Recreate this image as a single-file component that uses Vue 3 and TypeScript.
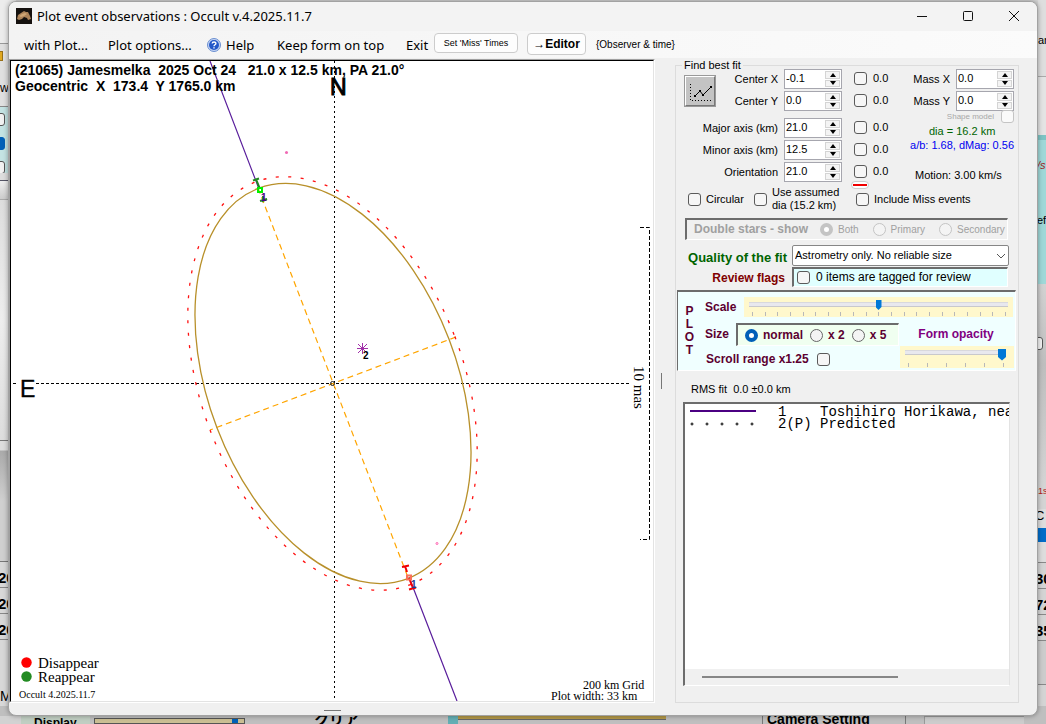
<script setup lang="ts">
import { ref } from 'vue'

interface Fit { id: string; label: string; value: string }

const centre = ref<Fit[]>([
  { id: 'cx', label: 'Center X', value: '-0.1' },
  { id: 'cy', label: 'Center Y', value: '0.0' },
])
const shape = ref<Fit[]>([
  { id: 'major', label: 'Major axis (km)', value: '21.0' },
  { id: 'minor', label: 'Minor axis (km)', value: '12.5' },
  { id: 'orient', label: 'Orientation', value: '21.0' },
])
const mass = ref<Fit[]>([
  { id: 'mx', label: 'Mass X', value: '0.0' },
  { id: 'my', label: 'Mass Y', value: '0.0' },
])
const groups = [centre, shape]

const size = ref('normal')
const sizes = ['normal', 'x 2', 'x 5']
const star = ref('Both')
const stars = ['Both', 'Primary', 'Secondary']
const scale = ref(10)
const opacity = ref(5)

function step(f: Fit, d: number) {
  f.value = (parseFloat(f.value) + d).toFixed(1)
}
</script>

<template>
  <div class="desktop">
    <div class="edge left" aria-hidden="true">
      <i class="l1"></i><i class="l2"><b></b></i><i class="l3">wi</i>
      <i class="l4"><u></u><u class="on"></u><u></u></i>
      <i class="l5"></i><i class="l6"></i><i class="l7"></i><i class="l8"></i>
      <i class="num">20</i><i class="num">20</i><i class="num">20</i>
      <i class="l9">M</i>
    </div>
    <div class="edge right" aria-hidden="true">
      <i class="r1">an</i><i class="r2"></i>
      <i class="r3"><em>/s</em><span>ef</span></i>
      <i class="r4"><u></u></i><i class="r5">1s</i><i class="r6">C</i><i class="r7"></i>
      <i class="r8"></i>
      <i class="num">30</i><i class="num">72</i><i class="num">35</i><i class="r9"></i>
    </div>
    <div class="edge bottom" aria-hidden="true">
      <i class="b1"></i><i class="b2">Display</i><i class="b3"><b></b></i><i class="b4">クリア</i>
      <i class="b5"></i><i class="b6"></i><i class="b7"></i><i class="b8">Camera Setting</i><i class="b9"></i>
    </div>

    <main class="window">
      <header class="title">
        <svg class="logo" viewBox="0 0 16 16"><rect width="16" height="16" fill="#15110f" /><path d="M1 11 2 7 5 5 8 3 10 4 12 4 14 8 15 11 12 12 11 10 8 9 6 11 3 12Z" fill="#ad8359" /><path d="M3 8 6 6 9 5 11 6 8 8 5 9Z" fill="#d0a675" /></svg>
        <h1>Plot event observations : Occult v.4.2025.11.7</h1>
        <button class="cap" aria-label="Minimise"><svg viewBox="0 0 12 12"><path d="M1 6.5H11" /></svg></button>
        <button class="cap" aria-label="Maximise"><svg viewBox="0 0 12 12"><rect x="1.5" y="1.5" width="9" height="9" rx="1" /></svg></button>
        <button class="cap" aria-label="Close"><svg viewBox="0 0 12 12"><path d="M1 1 11 11M11 1 1 11" /></svg></button>
      </header>

      <nav class="menu">
        <button class="mi m1">with Plot...</button>
        <button class="mi m2">Plot options...</button>
        <button class="mi m3">
          <svg viewBox="0 0 14 14"><circle cx="7" cy="7" r="6.5" fill="#c6d6f4" stroke="#6a8fd0" /><circle cx="7" cy="7" r="5" fill="#2458c8" /><path d="M5.2 5.6C5.2 3.4 8.9 3.4 8.9 5.5 8.9 6.8 7 6.8 7 8.2M7 9.3V10.6" fill="none" stroke="#fff" stroke-width="1.4" /></svg>
          Help
        </button>
        <button class="mi m4">Keep form on top</button>
        <button class="mi m5">Exit</button>
        <button class="push miss">Set 'Miss' Times</button>
        <button class="push editor">→Editor</button>
        <button class="obs">{Observer &amp; time}</button>
      </nav>

      <div class="body">
        <section class="plot">
          <svg viewBox="11 61 642 640" preserveAspectRatio="xMidYMid meet" role="img" aria-label="Asteroid profile plot">
            <g fill="none">
              <path d="M334.500 61V701" stroke="#000" stroke-dasharray="2 3" />
              <path d="M13 383.500H17M36 383.500H629" stroke="#000" stroke-dasharray="3 2" />
              <path d="M640 227.500H649.500V539.500H640" stroke="#000" stroke-dasharray="4 2" />
              <path d="M210 61 259 189M409 577 457 701" stroke="#5a1f9c" stroke-width="1.2" />
              <path d="M258 188 409 580M456 337 210 430" stroke="#ffa500" stroke-width="1.2" stroke-dasharray="6 4" />
              <ellipse cx="333" cy="383.500" rx="124.200" ry="208.900" transform="rotate(-21 333 383.500)" stroke="#b8902a" stroke-width="1.300" />
              <ellipse cx="332.500" cy="383.500" rx="131" ry="215.700" transform="rotate(-21 332.500 383.500)" stroke="#ff1010" stroke-width="1.300" stroke-dasharray="3 9.500" />
              <circle cx="332.500" cy="383.500" r="2" stroke="#222" />
              <circle cx="437" cy="543.500" r="1" stroke="#ff5fb0" />
              <path d="M358 344 367 353M367 344 358 353M362.500 343V354M357 348.500H368" stroke="#a030a8" />
              <path d="M253 180.500 259 178.500M256 179 260 189M263 196V201L267 199M260 201 267 199" stroke="#228b22" stroke-width="2" />
              <rect x="258" y="188" width="4" height="4" stroke="#00f000" stroke-width="2" />
              <path d="M402 567 409 565.500M405 566 407 572M409 578 413 588M409 589.500 416 587.500" stroke="#f00000" stroke-width="2" />
              <rect x="407" y="575.500" width="4" height="4" stroke="#fa7058" stroke-width="2" />
            </g>
            <circle cx="286.500" cy="152.500" r="1.500" fill="#f06ab4" />
            <circle cx="26.500" cy="662.500" r="5.200" fill="#ff0000" />
            <circle cx="26.500" cy="676.500" r="5.200" fill="#228b22" />
            <g class="bold">
              <text x="15" y="75">(21065) Jamesmelka&#160; 2025 Oct 24&#160;&#160; 21.0 x 12.5 km, PA 21.0°</text>
              <text x="15" y="91">Geocentric&#160; X&#160; 173.4&#160; Y 1765.0 km</text>
            </g>
            <text class="compass heavy" x="330" y="95">N</text>
            <text class="compass" x="20" y="397">E</text>
            <text class="mark" x="261" y="201" fill="#4b0082">1</text>
            <text class="mark" x="363" y="359">2</text>
            <text class="mark" x="411" y="588" fill="#203a90">1</text>
            <text class="serif mas" transform="translate(634 366) rotate(90)">10 mas</text>
            <text class="serif big" x="38" y="668">Disappear</text>
            <text class="serif big" x="38" y="682">Reappear</text>
            <text class="serif small" x="19" y="698">Occult 4.2025.11.7</text>
            <text class="serif" x="583" y="689">200 km Grid</text>
            <text class="serif" x="551" y="700">Plot width: 33 km</text>
          </svg>
        </section>

        <div class="splitter"></div>

        <fieldset class="panel">
          <legend>Find best fit</legend>
          <div class="fit">
            <div class="fitl">
              <div v-for="(g, gi) in groups" :key="gi" class="group">
                <button v-if="gi === 0" class="chart" aria-label="Find best fit">
                  <svg viewBox="0 0 28 28"><path d="M4.500 7V24M6 23.500H26" stroke-dasharray="1 2" /><path d="M9 19 14 14 17 18 25 10" /><g class="pt"><path d="M8 18h2v2H8zM13 13h2v2h-2zM16 17h2v2h-2zM24 9h2v2h-2z" /></g></svg>
                </button>
                <div class="rows">
                  <div v-for="f in g.value" :key="f.id" class="row">
                    <label class="lab" :for="f.id">{{ f.label }}</label>
                    <span class="spin">
                      <input :id="f.id" v-model="f.value" type="text">
                      <span class="arrows">
                        <button aria-label="Increase" @click="step(f, 0.1)"></button>
                        <button class="dn" aria-label="Decrease" @click="step(f, -0.1)"></button>
                      </span>
                    </span>
                    <label class="adj"><input type="checkbox" class="cb">0.0</label>
                  </div>
                </div>
              </div>
              <button class="pill" aria-label="Clear all"><span></span></button>
            </div>
            <div class="fitr">
              <div v-for="f in mass" :key="f.id" class="row">
                <label class="lab" :for="f.id">{{ f.label }}</label>
                <span class="spin">
                  <input :id="f.id" v-model="f.value" type="text">
                  <span class="arrows">
                    <button aria-label="Increase" @click="step(f, 0.1)"></button>
                    <button class="dn" aria-label="Decrease" @click="step(f, -0.1)"></button>
                  </span>
                </span>
              </div>
              <label class="shape">Shape model <input type="checkbox" class="cb" disabled></label>
              <p class="dia">dia = 16.2 km</p>
              <p class="ab">a/b: 1.68, dMag: 0.56</p>
              <p class="motion">Motion: 3.00 km/s</p>
            </div>
          </div>

          <div class="opts">
            <label class="o1"><input type="checkbox" class="cb">Circular</label>
            <label class="o2"><input type="checkbox" class="cb"><span>Use assumed<br>dia (15.2 km)</span></label>
            <label><input type="checkbox" class="cb">Include Miss events</label>
          </div>

          <div class="double sunken">
            <span class="dt">Double stars - show</span>
            <label v-for="s in stars" :key="s"><input v-model="star" type="radio" class="rb" name="star" :value="s" disabled>{{ s }}</label>
          </div>

          <div class="line q">
            <label class="qt" for="quality">Quality of the fit</label>
            <span class="sel">
              <select id="quality"><option>Astrometry only. No reliable size</option></select>
              <svg viewBox="0 0 10 6"><path d="M1 1 5 5 9 1" /></svg>
            </span>
          </div>
          <div class="line rv">
            <span class="rt">Review flags</span>
            <label class="flags sunken"><input type="checkbox" class="cb">0 items are tagged for review</label>
          </div>

          <div class="plotbox sunken">
            <div class="word"><span>P</span><span>L</span><span>O</span><span>T</span></div>
            <div class="pl">
              <div class="scalerow">
                <label for="scale">Scale</label>
                <span class="slider">
                  <input id="scale" v-model="scale" type="range" min="0" max="20">
                  <span class="ticks"><i v-for="n in 21" :key="n"></i></span>
                </span>
              </div>
              <div class="lower">
                <div class="ll">
                  <div class="sizerow">
                    <span>Size</span>
                    <span class="sizes sunken">
                      <label v-for="s in sizes" :key="s"><input v-model="size" type="radio" class="rb" name="size" :value="s">{{ s }}</label>
                    </span>
                  </div>
                  <label class="scroll">Scroll range x1.25 <input type="checkbox" class="cb"></label>
                </div>
                <div class="lr">
                  <label for="opacity">Form opacity</label>
                  <span class="slider op">
                    <input id="opacity" v-model="opacity" type="range" min="0" max="5">
                    <span class="ticks"><i v-for="n in 6" :key="n"></i></span>
                  </span>
                </div>
              </div>
            </div>
          </div>

          <p class="rms">RMS fit&#160; 0.0 ±0.0 km</p>

          <div class="list sunken">
            <ul>
              <li><svg viewBox="0 0 66 4"><path d="M0 1H66" stroke="#4b0082" stroke-width="2" /></svg><span class="no">1</span><span>Toshihiro Horikawa, near</span></li>
              <li><svg viewBox="0 0 66 4"><g fill="#fff" stroke="#000"><circle v-for="n in 5" :key="n" :cx="n * 15 - 13" cy="2" r="1" /></g></svg><span class="no">2(P)</span><span>Predicted</span></li>
            </ul>
            <div class="hbar"><span></span></div>
          </div>
        </fieldset>
      </div>
      <footer class="foot"><span></span></footer>
    </main>
  </div>
</template>

<style>
html, body { margin: 0; }
</style>

<style scoped>
* { box-sizing: border-box; }
.desktop { position: relative; display: flex; height: 100vh; min-height: 724px; padding: 1px 8px 8px; background: #d4d4d4; overflow: hidden; font: 11px/13px "Liberation Sans", Arial, "Noto Sans CJK JP", sans-serif; color: #000; }
button { padding: 0; margin: 0; border: 0; background: none; font: inherit; color: inherit; }
p, h1, ul { margin: 0; padding: 0; font: inherit; }
input { margin: 0; }

.edge { position: absolute; overflow: hidden; display: flex; }
.edge i { display: block; flex: none; overflow: hidden; font-style: normal; white-space: nowrap; }
.edge u { display: block; width: 14px; height: 13px; margin-left: -9px; border: 1px solid #555; border-radius: 3px; background: #f2f2f2; }
.left, .right { top: 0; bottom: 0; width: 16px; flex-direction: column; }
.left { left: 0; background: #d8d8d8; }
.right { right: 0; padding-left: 8px; background: #d4d4d4; }
.l1 { height: 44px; background: #ececec; border-bottom: 1px solid #999; }
.l2 { height: 36px; padding-top: 7px; background: #e0e0e0; }
.l2 b { display: block; width: 3px; height: 10px; background: #e0a820; border: 1px solid #987018; border-left: 0; }
.l3 { height: 27px; padding-top: 2px; font-size: 12px; background: #e0e0e0; border-bottom: 1px solid #888; }
.l4 { height: 66px; padding-top: 6px; background: #c4e3e3; }
.left .l4 u { margin-bottom: 11px; }
.left .on { background: #0060b8; border-color: #0060b8; }
.l5 { height: 8px; background: #ddd; border-bottom: 1px solid #556; }
.l6 { height: 19px; background: linear-gradient(#eee, #ccc); border-bottom: 1px solid #aaa; }
.l7 { height: 241px; background: linear-gradient(#ddd, #eee, #ddd); border-bottom: 1px solid #777; }
.l8 { height: 121px; background: linear-gradient(#ddd 9px, #aaa 10px, #d0d0d0 60px); border-bottom: 1px solid #777; }
.left .num, .right .num { height: 26px; padding-top: 7px; font-weight: bold; font-size: 15px; line-height: 17px; border-bottom: 1px solid #888; }
.left .num { margin-left: -2px; }
.right .num { margin-left: -3px; }
.l9 { padding-top: 46px; font-size: 14px; line-height: 20px; }
.r1 { height: 77px; padding-top: 34px; background: #dedede; border-bottom: 1px solid #aaa; }
.r2 { height: 58px; background: #e4e4e4; }
.r3 { height: 149px; margin-left: -4px; padding: 19px 0 0 4px; background: #9fd8d8; border-top: 5px solid #7dc4c4; }
.r3 em, .r3 span { display: block; height: 55px; margin-left: -1px; }
.r3 em { color: #a02020; }
.r4 { height: 201px; padding-top: 53px; background: linear-gradient(#d2d2d2, #bebebe 80px, #d4d4d4); }
.r5 { height: 24px; color: #b02020; font-size: 9px; }
.r6 { height: 19px; font-size: 13px; background: #ddd; margin-left: -3px; }
.r7 { height: 14px; background: #006cc8; }
.r8 { height: 21px; border-bottom: 1px solid #888; background: #ddd; }
.r9 { height: 44px; border-bottom: 1px solid #888; background: #ccc; }
.bottom { left: 0; right: 0; bottom: 0; height: 18px; padding-top: 10px; background: #bfbfbf; }
.bottom i { height: 8px; line-height: 15px; font-weight: bold; font-size: 12px; }
.b1 { width: 21px; background: #d2d2d2; }
.b2 { width: 69px; padding-left: 13px; background: #c0cec2; }
.bottom .b3 { width: 151px; margin: 2px 4px 0; height: 6px; border: 1px solid #555; background: #cbbf94; }
.b3 b { display: block; width: 6px; height: 4px; margin-left: 137px; background: #0060b8; }
.bottom .b4 { width: 199px; padding-left: 65px; font-size: 15px; line-height: 8px; }
.b5 { width: 10px; background: #63aeb4; }
.bottom .b6 { width: 208px; height: 4px; background: #b39848; border-bottom: 1px solid #666; }
.b7 { width: 96px; }
.bottom .b8 { width: 144px; padding-left: 4px; font-size: 14px; line-height: 7px; border: 1px solid #777; border-width: 0 1px; }
.b9 { width: 100px; margin-left: 18px; border: 1px solid #999; border-width: 1px 0 0 1px; background: #ccc; }

.window { position: relative; flex: 1; min-width: 0; display: flex; flex-direction: column; border: 1px solid #a2a2a2; border-radius: 8px; background: #f0f0f0; overflow: hidden; box-shadow: 0 0 5px rgba(0, 0, 0, .35); }
.title { display: flex; align-items: center; height: 29px; padding: 0 0 2px 7px; background: #f3f3f3; }
.logo { width: 16px; height: 16px; }
.title h1 { flex: 1; margin-left: 5px; font: 13px/20px "Noto Sans", sans-serif; white-space: nowrap; }
.cap { width: 46px; height: 27px; display: grid; place-items: center; }
.cap svg { width: 12px; height: 12px; fill: none; stroke: #111; }
.menu { display: flex; align-items: center; height: 27px; padding-left: 15px; background: linear-gradient(90deg, #f3f3f3, #fbfbfb); font: 13px/20px "Noto Sans", sans-serif; white-space: nowrap; }
.mi { flex: none; text-align: left; }
.m1 { width: 84px; }
.m2 { width: 99px; }
.m3 { width: 70px; display: flex; align-items: center; gap: 5px; }
.m3 svg { width: 14px; height: 14px; }
.m4 { width: 129px; }
.m5 { width: 28px; }
.push { flex: none; height: 22px; border: 1px solid #ccc; border-radius: 4px; background: #fdfdfd; }
.miss { width: 84px; margin-bottom: 4px; font: 9px/12px "Liberation Sans", Arial, sans-serif; height: 20px; }
.editor { width: 59px; margin: 0 0 2px 9px; font: bold 12px/14px "Liberation Sans", Arial, sans-serif; }
.obs { margin-left: 10px; font: 10px/13px "Liberation Sans", Arial, sans-serif; }

.body { flex: 1; min-height: 0; display: flex; padding: 1px 18px 0 0; }
.plot { flex: 1; min-width: 0; background: #fff; border: 1px solid; border-color: #a0a0a0 #fff #fff #a0a0a0; }
.plot svg { display: block; width: 100%; height: 100%; border: 1px solid; border-color: #000 #e3e3e3 #e3e3e3 #000; }
.plot text { font: 12px "Liberation Serif", serif; }
.plot .bold text { font: bold 14px "Liberation Sans", Arial, sans-serif; }
.plot .compass { font: 23px "Liberation Sans", Arial, sans-serif; stroke: #000; stroke-width: .4px; }
.plot .heavy { stroke-width: 1px; }
.plot .mark { font: bold 10px "Liberation Sans", Arial, sans-serif; }
.plot .big { font-size: 15px; }
.plot .mas { font-size: 15px; }
.plot .small { font-size: 10px; }
.splitter { flex: none; width: 20px; display: flex; align-items: center; padding-left: 6px; }
.splitter::before { content: ""; width: 1px; height: 16px; background: #777; }

.panel { flex: none; width: 344px; min-width: 0; margin: 0; padding: 0; border: 1px solid #dcdcdc; display: flex; flex-direction: column; }
.panel legend { margin-left: 6px; padding: 0 2px; height: 13px; }
.fit { display: flex; height: 115px; margin-top: -4px; }
.fitl { width: 216px; }
.group { display: flex; }
.group + .group { margin-top: 5px; }
.rows { flex: 1; }
.row { display: flex; align-items: center; height: 22px; white-space: nowrap; }
.lab { flex: 1; text-align: right; margin-right: 6px; padding-top: 1px; }
.chart { width: 32px; height: 32px; margin: 7px 0 0 8px; border: 2px solid; border-color: #fff #777 #777 #fff; outline: 1px solid #999; outline-offset: -1px; background: #c3c3c3; }
.chart svg { display: block; width: 28px; height: 28px; fill: none; stroke: #000; }
.chart .pt { fill: #000; stroke: none; }
.spin { flex: none; display: flex; width: 58px; height: 20px; border: 1px solid #a6a6ae; background: #fff; }
.spin input { flex: 1; width: 10px; min-width: 0; padding: 0 0 2px 1px; border: 0; background: none; font: inherit; outline: 0; }
.arrows { display: flex; flex-direction: column; width: 16px; gap: 1px; padding: 1px 1px 1px 0; }
.arrows button { flex: 1; display: grid; place-items: center; border: 1px solid #d4d4d4; background: #f4f4f4; }
.arrows button::after { content: ""; border: 3px solid transparent; border-top: 0; border-bottom: 4px solid #000; }
.arrows .dn::after { border-bottom: 0; border-top: 4px solid #000; }
.adj { display: flex; align-items: center; gap: 6px; width: 50px; padding: 0 0 2px 12px; }
.cb { appearance: none; flex: none; width: 13px; height: 13px; border: 1px solid #5a5a5a; border-radius: 3px; background: #f6f6f6; }
.cb:checked { background: #0067c0; }
.cb:disabled { border-color: #c4c4c4; background: #fafafa; }
.pill { display: grid; place-items: center; width: 18px; height: 8px; margin: -2px 0 0 175px; border: 1px solid #ccc; border-radius: 4px; background: #fff; }
.pill span { width: 14px; height: 2px; background: #f00000; }
.fitr { flex: 1; padding-right: 4px; white-space: nowrap; }
.shape { display: flex; justify-content: flex-end; align-items: center; gap: 7px; height: 13px; margin-top: -2px; font-size: 8px; color: #a8a8a8; }
.dia { margin: 1px 0 0 37px; color: #006400; line-height: 14px; }
.ab { text-align: right; color: #0000f0; line-height: 14px; }
.motion { margin: 17px 0 0 23px; }
.opts { display: flex; align-items: center; height: 24px; margin: 4px 0 0 12px; white-space: nowrap; }
.opts label { display: flex; align-items: center; gap: 5px; }
.opts .o1 { width: 66px; }
.opts .o2 { width: 102px; }
.sunken { border: 1px solid; border-color: #6c6c6c #fff #fff #6c6c6c; }
.double { display: flex; align-items: center; height: 22px; margin: 7px 10px 0 9px; padding-left: 7px; border-width: 2px 1px 1px 2px; color: #a0a0a0; font-size: 10px; white-space: nowrap; }
.dt { flex: none; width: 126px; font-weight: bold; font-size: 12px; }
.double label { display: flex; flex: none; align-items: center; gap: 5px; }
.double label + label { margin-left: 14px; }
.rb { appearance: none; flex: none; width: 13px; height: 13px; border: 1px solid #666; border-radius: 50%; background: #f4f4f4; }
.rb:checked { border: 4px solid #005fb8; background: #fff; }
.rb:disabled { border-color: #c4c4c4; }
.line { display: flex; align-items: center; white-space: nowrap; font-weight: bold; font-size: 12px; }
.q { margin-top: 5px; padding-right: 9px; }
.qt { width: 111px; margin-right: 5px; padding-top: 4px; text-align: right; font-size: 13px; color: #006400; }
.sel { flex: 1; display: grid; align-items: center; }
.sel select, .sel svg { grid-area: 1 / 1; }
.sel select { appearance: none; width: 100%; height: 21px; padding: 0 2px; border: 1px solid #868686; border-radius: 2px; background: #fff; font: 11px/15px "Liberation Sans", Arial, sans-serif; color: #000; }
.sel svg { justify-self: end; width: 10px; height: 6px; margin-right: 3px; fill: none; stroke: #555; pointer-events: none; }
.rv { margin-top: 1px; padding-right: 10px; }
.rt { width: 109px; margin-right: 7px; padding-top: 2px; text-align: right; color: #800000; }
.flags { flex: 1; display: flex; align-items: center; gap: 6px; height: 20px; padding-left: 3px; border-width: 2px 1px 1px 2px; background: #e0ffff; font-weight: normal; }
.plotbox { display: flex; height: 81px; margin: 3px 2px 0 1px; border-width: 2px 1px 1px 1px; background: #f0ffff; color: #5c0030; font-weight: bold; white-space: nowrap; }
.word { width: 27px; display: flex; flex-direction: column; align-items: center; padding: 13px 4px 0 0; font-size: 12px; }
.pl { flex: 1; min-width: 0; }
.scalerow { display: flex; align-items: center; height: 30px; padding-right: 2px; font-size: 12px; }
.scalerow label { width: 39px; }
.slider { flex: 1; display: block; height: 20px; padding: 3px 5px 0; background: #fff8cc; }
.slider input { appearance: none; display: block; width: 100%; height: 10px; background: linear-gradient(transparent 2px, #c8c8cc 2px, #e8e8ee 3px, #e8e8ee 6px, #c8c8cc 6px, #c8c8cc 7px, transparent 7px); outline: 0; }
.slider input::-webkit-slider-thumb { appearance: none; width: 6px; height: 10px; background: #0078d7; clip-path: polygon(0 0, 100% 0, 100% 70%, 50% 100%, 0 70%); }
.ticks { display: flex; justify-content: space-between; margin: 2px 2px 0 3px; }
.ticks i { width: 1px; height: 4px; background: #b8b8b8; }
.lower { display: flex; }
.ll { width: 194px; }
.sizerow { display: flex; align-items: center; margin-top: 1px; font-size: 12px; }
.sizerow > span:first-child { width: 31px; }
.sizes { display: flex; align-items: center; gap: 7px; width: 163px; height: 23px; padding-left: 7px; border-width: 2px 1px 1px 2px; background: #f0fff0; }
.sizes label { display: flex; align-items: center; gap: 5px; }
.scroll { display: flex; align-items: center; gap: 8px; margin: 7px 0 0 1px; font-size: 12px; }
.lr { flex: 1; padding-top: 6px; color: #800080; text-align: center; font-size: 12px; }
.lr label { display: block; padding-right: 2px; }
.op { height: 22px; margin: 5px 1px 0; padding: 2px 8px 0 5px; }
.op input { height: 13px; }
.op input::-webkit-slider-thumb { width: 8px; height: 12px; }
.rms { margin: 12px 0 0 15px; }
.list { flex: 1; min-height: 0; margin: 6px 8px 16px 7px; border-width: 2px 1px 1px 2px; border-right-color: #e3e3e3; background: #fff; display: flex; flex-direction: column; overflow: hidden; }
.list ul { flex: 1; padding-top: 2px; list-style: none; font: 14px/12px "Liberation Mono", monospace; white-space: pre; }
.list li { display: flex; align-items: center; height: 12px; }
.list svg { flex: none; width: 66px; height: 4px; margin: 0 22px 0 5px; }
.no { flex: none; width: 42px; }
.hbar { height: 16px; padding: 7px 0 0 17px; background: #f0f0f0; }
.hbar span { display: block; width: 64%; height: 2px; background: #868686; }
.foot { height: 12px; padding: 7px 0 0 315px; }
.foot span { display: block; width: 17px; height: 1px; background: #777; }
</style>
